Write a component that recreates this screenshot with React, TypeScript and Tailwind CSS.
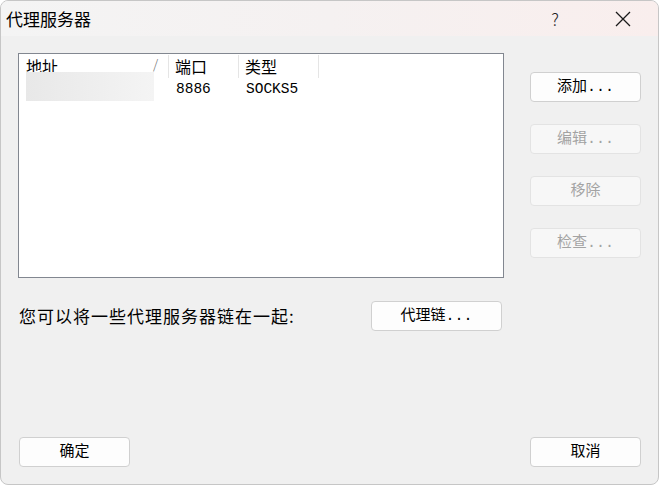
const cjk = { fontFamily: '"Noto Sans CJK SC", sans-serif' };
const mono = { fontFamily: '"Liberation Mono", "Noto Sans CJK SC", monospace' };

const Btn = ({ label, disabled, className = "" }: { label: string; disabled?: boolean; className?: string }) => (
    <button
        style={mono}
        className={`h-[30px] rounded-[4px] border text-[15px] leading-none flex items-center justify-center ${disabled ? "border-[#e3e3e3] bg-[#f7f7f7] text-[#a3a3a3]" : "border-[#d0d0d0] bg-[#fdfdfd] text-black"} ${className}`}
    >
        {label}
    </button>
);

const App = () => {
    return (
        <div className="w-[659px] h-[485px] bg-white">
            <div className="w-full h-full rounded-lg border border-[#c6c6c6] bg-[#f0f0f0] overflow-hidden flex flex-col">
                {/* title bar */}
                <div className="h-[35px] flex items-center bg-gradient-to-r from-[#f4f4f4] via-[#f5f1f1] to-[#f9eeed]">
                    <span style={cjk} className="ml-[5px] text-[17px] text-black">代理服务器</span>
                    <span style={cjk} className="ml-auto mr-[56px] text-[17px] text-[#222] font-light">?</span>
                    <svg width="16" height="16" viewBox="0 0 16 16" className="mr-[27px]">
                        <path d="M1 1L15 15M15 1L1 15" stroke="#1a1a1a" strokeWidth="1.3" />
                    </svg>
                </div>

                {/* body */}
                <div className="flex-1 flex flex-col pl-[17px] pr-[17px]">
                    <div className="flex mt-[17px]">
                        <div className="relative w-[486px] h-[225px] border border-[#828790] bg-white">
                            <div style={cjk} className="flex h-[24px] pt-[1px] text-[16px] text-black">
                                <div className="w-[150px] flex pl-[7px] pr-[10px] border-r border-[#e5e5e5]">
                                    <span className="leading-[22px]">地址</span>
                                    <span className="ml-auto leading-[18px] text-[13px] font-light text-[#666]">/</span>
                                </div>
                                <div className="w-[70px] pl-[6px] leading-[22px] border-r border-[#e5e5e5]">端口</div>
                                <div className="w-[80px] pl-[6px] leading-[22px] border-r border-[#e5e5e5]">类型</div>
                            </div>
                            <div style={mono} className="flex h-[24px] text-[14.5px] text-black items-center">
                                <div className="w-[150px]" />
                                <div className="w-[70px] pl-[7px]">8886</div>
                                <div className="w-[80px] pl-[7px]">SOCKS5</div>
                            </div>
                            <div className="absolute left-[7px] top-[18px] w-[128px] h-[29px] bg-gradient-to-r from-[#e8e8e8] to-[#f4f4f4]" />
                        </div>

                        <div className="flex flex-col ml-[26px] pt-[19px] gap-[22px]">
                            <Btn label="添加..." className="w-[111px]" />
                            <Btn label="编辑..." disabled className="w-[111px]" />
                            <Btn label="移除" disabled className="w-[111px]" />
                            <Btn label="检查..." disabled className="w-[111px]" />
                        </div>
                    </div>

                    <div className="flex items-center mt-[23px] h-[30px]">
                        <span style={cjk} className="ml-[1px] text-[17px] tracking-[1px] text-black">您可以将一些代理服务器链在一起:</span>
                        <Btn label="代理链..." className="w-[131px] ml-auto mr-[139px]" />
                    </div>

                    <div className="flex mt-auto mb-[17px] pl-[1px]">
                        <Btn label="确定" className="w-[111px]" />
                        <Btn label="取消" className="w-[111px] ml-auto" />
                    </div>
                </div>
            </div>
        </div>
    );
};

export default App;
